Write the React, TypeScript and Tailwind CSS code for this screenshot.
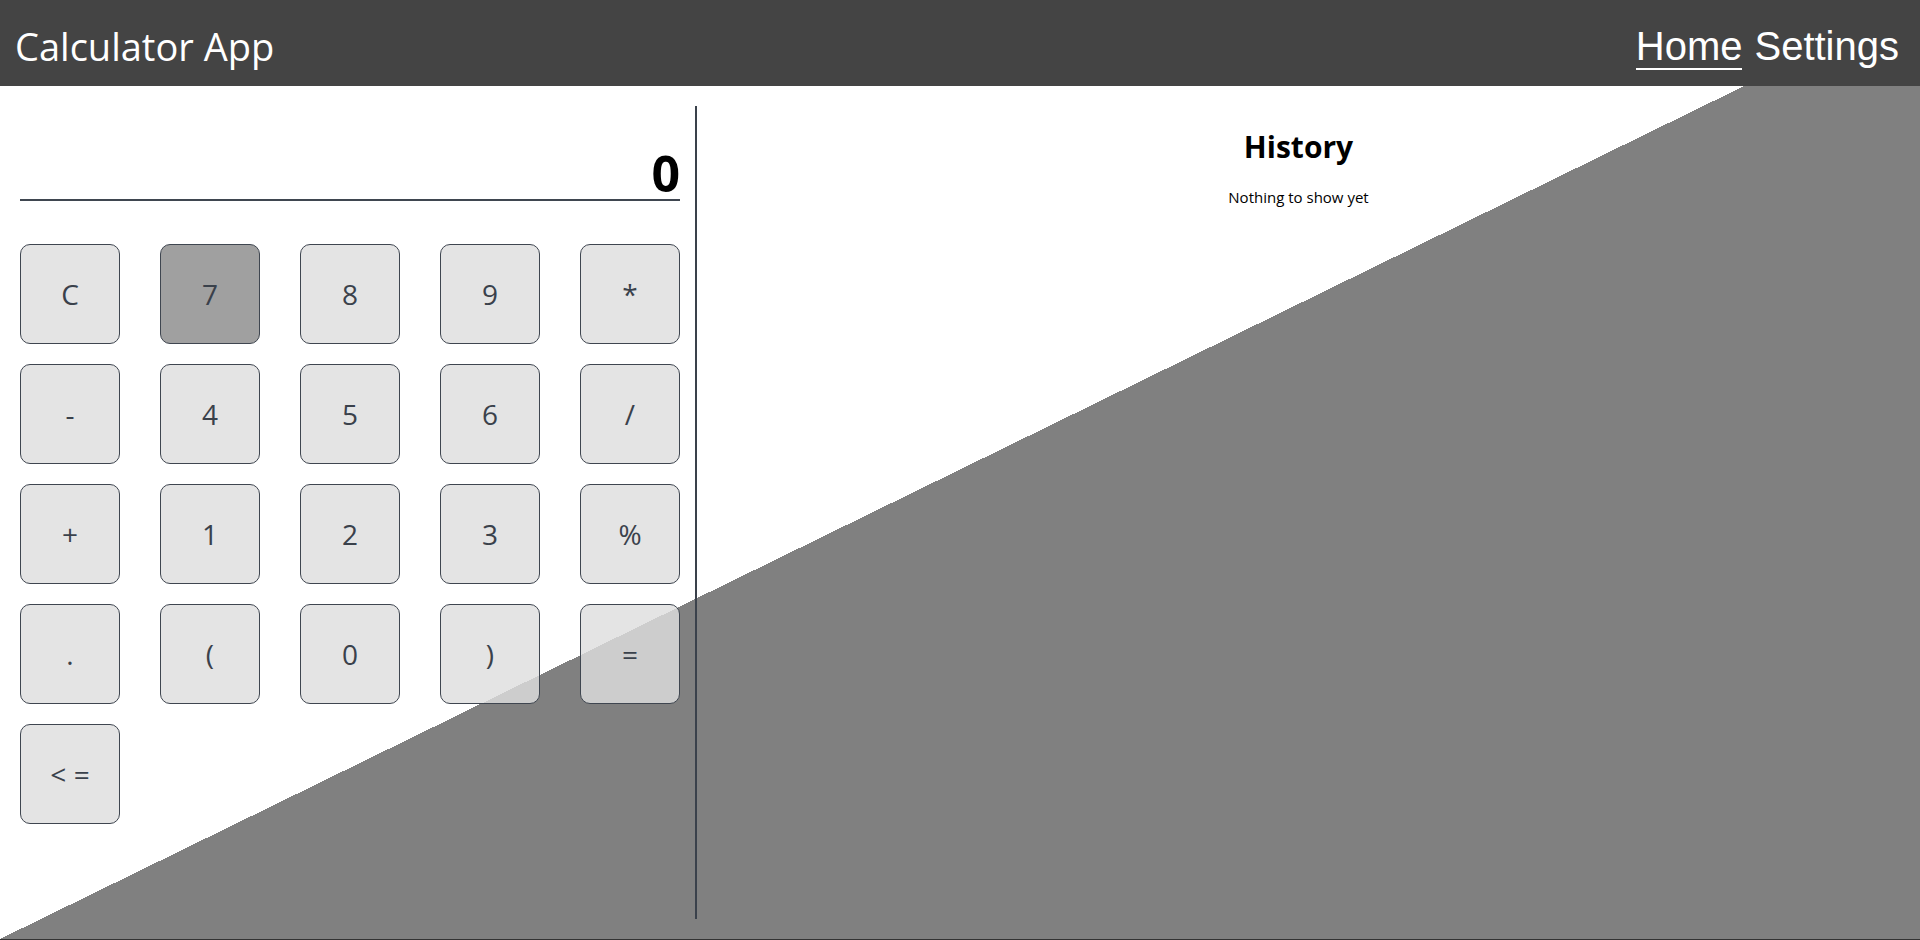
import { useState } from 'react'

const keys = [
  'C', '7', '8', '9', '*',
  '-', '4', '5', '6', '/',
  '+', '1', '2', '3', '%',
  '.', '(', '0', ')', '=',
  '<=',
]

export default function App() {
  const [display, setDisplay] = useState('0')
  const [hovered, setHovered] = useState<string | null>('7')

  const press = (key: string) => {
    if (key === 'C') return setDisplay('0')
    if (key === '<=') return setDisplay(d => (d.length > 1 ? d.slice(0, -1) : '0'))
    if (key === '=') return
    setDisplay(d => (d === '0' ? key : d + key))
  }

  return (
    <div
      className="h-[940px] border-b border-[#333] bg-[linear-gradient(to_bottom_right,#ffffff_50%,#808080_50%)]"
      style={{ fontFamily: '"Open Sans", "Noto Sans", sans-serif' }}
    >
      {/* Top bar */}
      <header className="flex justify-between h-[86px] bg-[#444444] text-white pl-[15px] pr-[21px]">
        <div className="pt-[27px] text-[38px] leading-none">Calculator App</div>
        <nav
          className="flex items-start gap-[12px] pt-[26px] text-[40px] leading-none"
          style={{ fontFamily: '"Liberation Sans", Arial, sans-serif' }}
        >
          <a className="pb-[2px] border-b-2 border-white cursor-pointer">Home</a>
          <a className="cursor-pointer">Settings</a>
        </nav>
      </header>

      <main className="flex pt-5 h-[833px]">
        {/* Calculator */}
        <section className="w-[697px] pl-5 pr-[15px] border-r-2 border-[#3a414b]">
          <div className="h-[95px] flex items-end justify-end border-b-2 border-[#3f4650] pb-[1px]">
            <span className="text-[50px] font-bold leading-none text-black">{display}</span>
          </div>

          <div className="grid grid-cols-[repeat(5,100px)] gap-x-10 gap-y-5 mt-[43px]">
            {keys.map(k => (
              <button
                key={k}
                onClick={() => press(k)}
                onMouseEnter={() => setHovered(k)}
                onMouseLeave={() => setHovered(null)}
                className={`w-[100px] h-[100px] rounded-[10px] border border-[#3f4650] text-[28px] text-[#3a414b] flex items-center justify-center ${
                  hovered === k ? 'bg-[#a0a0a0]' : 'bg-[rgba(222,222,222,0.82)]'
                }`}
              >
                {k === '<=' ? '< =' : k}
              </button>
            ))}
          </div>
        </section>

        {/* History */}
        <section className="flex-1 pr-5 pt-[26px] text-center text-black">
          <h2 className="text-[30px] font-bold leading-none">History</h2>
          <p className="mt-[28px] text-[15px] leading-none">Nothing to show yet</p>
        </section>
      </main>
    </div>
  )
}
